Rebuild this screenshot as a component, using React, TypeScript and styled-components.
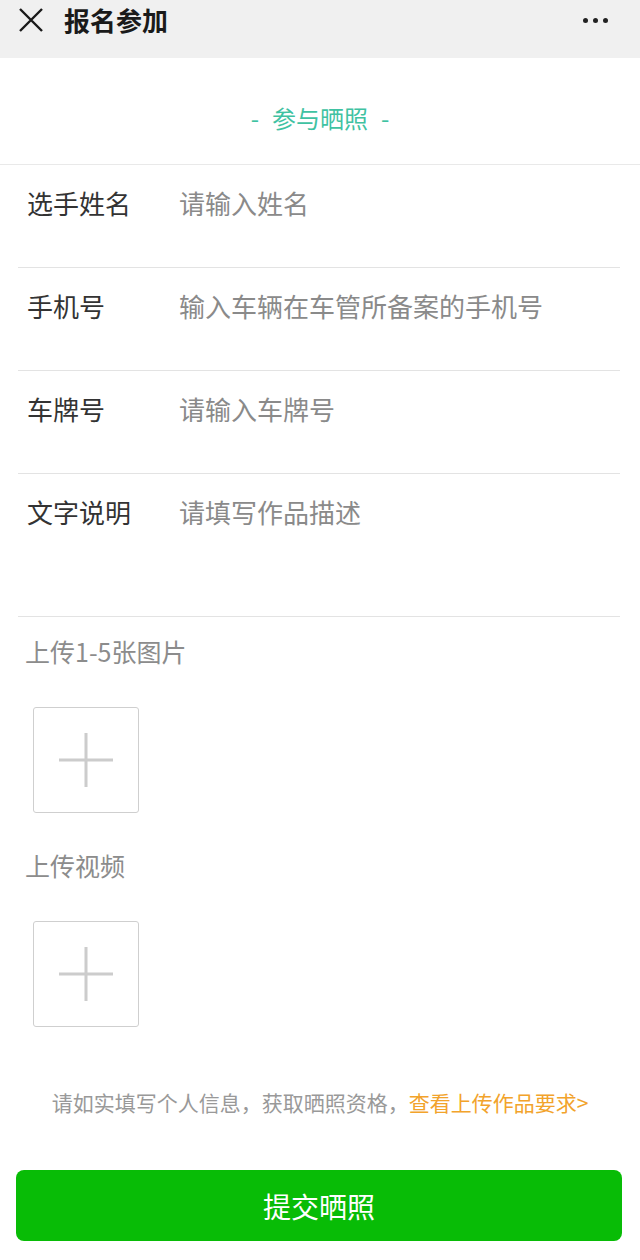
import styled, { createGlobalStyle } from 'styled-components'

const GlobalStyle = createGlobalStyle`
	html, body {
		margin: 0;
		padding: 0;
		background: #ffffff;
	}
	body {
		font-family: 'Noto Sans CJK SC', 'Noto Sans', sans-serif;
		width: 640px;
	}
`

const Page = styled.div`
	width: 640px;
	min-height: 1260px;
	background: #fff;
`

const TopBar = styled.div`
	height: 58px;
	background: #f0f0f0;
	display: flex;
	align-items: flex-start;
	padding: 0 20px 0 18px;
	box-sizing: border-box;
`

const CloseBtn = styled.div`
	width: 26px;
	height: 26px;
	margin-top: 7px;
	display: flex;
`

const TopTitle = styled.div`
	margin-left: 20px;
	font-size: 26px;
	font-weight: 700;
	color: #1a1a1a;
	line-height: 40px;
	flex: 1;
`

const MoreBtn = styled.div`
	display: flex;
	gap: 5px;
	margin-top: 18px;
	margin-right: 12px;

	span {
		width: 5px;
		height: 5px;
		border-radius: 50%;
		background: #222;
	}
`

const SectionTitle = styled.div`
	height: 107px;
	border-bottom: 1px solid #e9e9e9;
	display: flex;
	align-items: center;
	justify-content: center;
	gap: 13px;
	color: #3fc2a2;
	font-size: 24px;
	padding-top: 12px;
	box-sizing: border-box;
`

const FormList = styled.div`
	margin: 0 20px 0 18px;
`

const Row = styled.div<{ $tall?: boolean }>`
	display: flex;
	border-bottom: 1px solid #e3e3e3;
	padding: 20px 0 0 9px;
	font-size: 26px;
	line-height: 36px;
	height: ${props => (props.$tall ? '122px' : '82px')};
`

const Label = styled.div`
	width: 152px;
	color: #333;
`

const Placeholder = styled.div`
	color: #8a8a8a;
`

const UploadLabel = styled.div<{ $gap: number }>`
	margin: ${props => props.$gap}px 0 0 25px;
	font-size: 25px;
	line-height: 36px;
	color: #8c8c8c;
`

const UploadBox = styled.div`
	width: 104px;
	height: 104px;
	margin: 38px 0 0 33px;
	border: 1.5px solid #cfcfcf;
	border-radius: 3px;
	display: flex;
	align-items: center;
	justify-content: center;
`

const Notice = styled.div`
	margin-top: 60px;
	text-align: center;
	font-size: 21px;
	line-height: 30px;
	color: #999;

	a {
		color: #f2a32b;
		text-decoration: none;
	}
`

const SubmitBtn = styled.button`
	display: block;
	width: 606px;
	height: 71px;
	margin: 53px 0 0 16px;
	border: none;
	border-radius: 8px;
	background: #08bc06;
	color: #fff;
	font-family: 'Noto Sans CJK SC', sans-serif;
	font-size: 28px;
	padding: 0;
`

const Plus = () => (
	<svg width="54" height="54" viewBox="0 0 54 54">
		<path d="M27 0 V54 M0 27 H54" stroke="#cccccc" strokeWidth="3" />
	</svg>
)

const fields = [
	{ label: '选手姓名', hint: '请输入姓名' },
	{ label: '手机号', hint: '输入车辆在车管所备案的手机号' },
	{ label: '车牌号', hint: '请输入车牌号' },
	{ label: '文字说明', hint: '请填写作品描述', tall: true },
]

export default function App() {
	return (
		<>
			<GlobalStyle />
			<Page>
				<TopBar>
					<CloseBtn>
						<svg width="26" height="26" viewBox="0 0 26 26">
							<path d="M2 2 L24 24 M24 2 L2 24" stroke="#1a1a1a" strokeWidth="2.4" />
						</svg>
					</CloseBtn>
					<TopTitle>报名参加</TopTitle>
					<MoreBtn>
						<span />
						<span />
						<span />
					</MoreBtn>
				</TopBar>

				<SectionTitle>
					<span>-</span>
					<span>参与晒照</span>
					<span>-</span>
				</SectionTitle>

				<FormList>
					{fields.map(f => (
						<Row key={f.label} $tall={f.tall}>
							<Label>{f.label}</Label>
							<Placeholder>{f.hint}</Placeholder>
						</Row>
					))}
				</FormList>

				<UploadLabel $gap={16}>上传1-5张图片</UploadLabel>
				<UploadBox>
					<Plus />
				</UploadBox>

				<UploadLabel $gap={34}>上传视频</UploadLabel>
				<UploadBox>
					<Plus />
				</UploadBox>

				<Notice>
					请如实填写个人信息，获取晒照资格，<a href="#">查看上传作品要求&gt;</a>
				</Notice>

				<SubmitBtn>提交晒照</SubmitBtn>
			</Page>
		</>
	)
}
